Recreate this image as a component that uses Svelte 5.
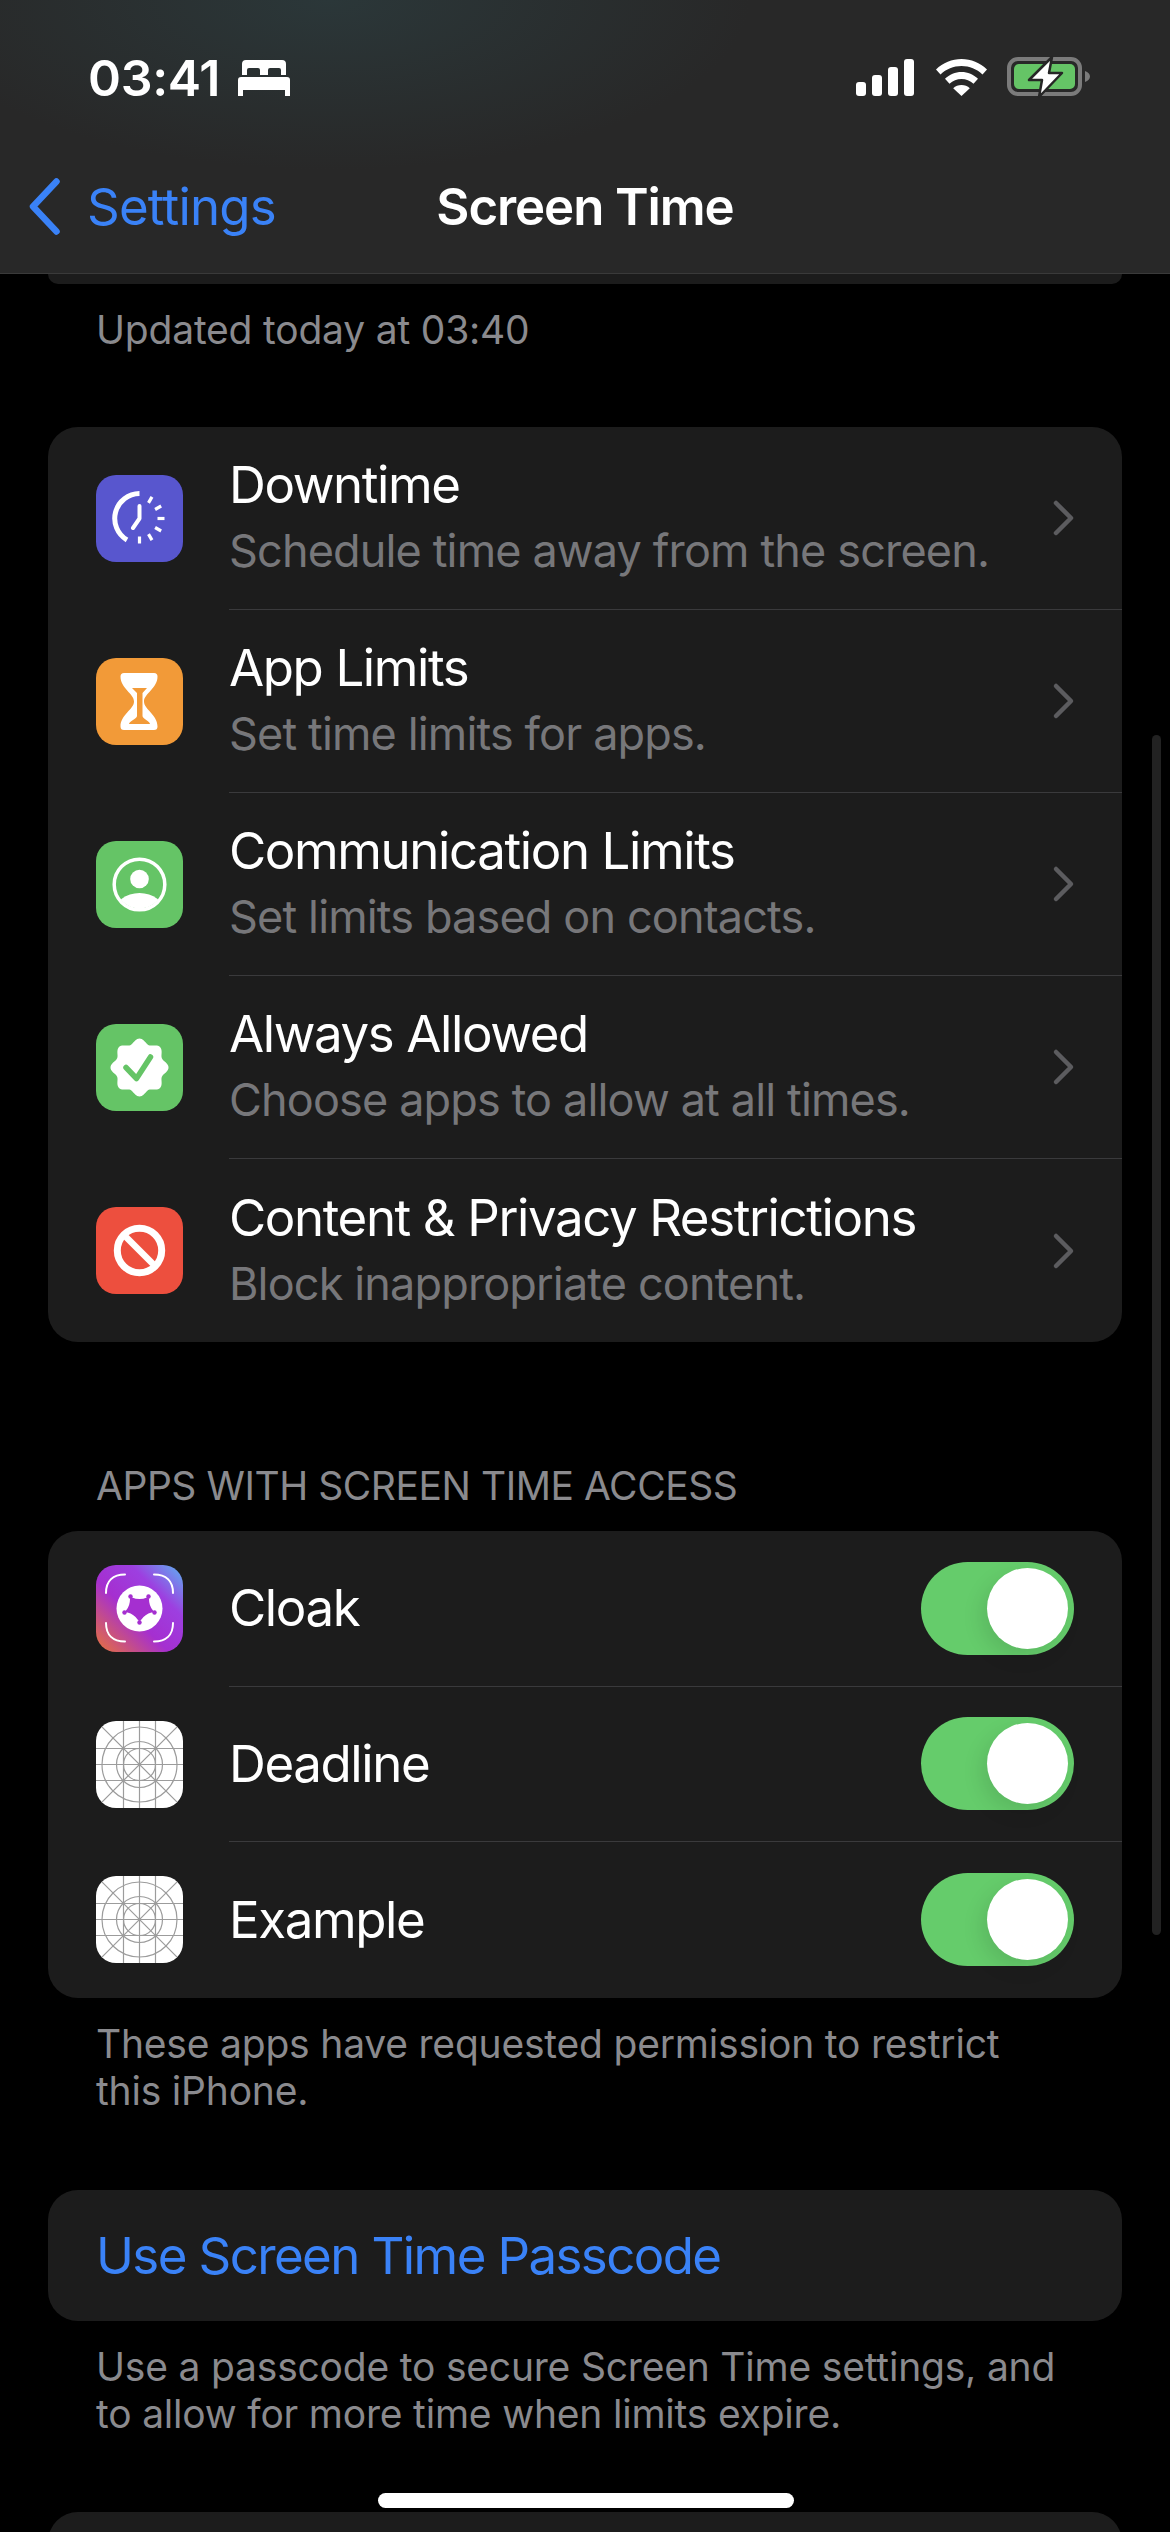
<script>
  const limits = [
    { icon: 'downtime', title: 'Downtime', sub: 'Schedule time away from the screen.' },
    { icon: 'limits', title: 'App Limits', sub: 'Set time limits for apps.' },
    { icon: 'comm', title: 'Communication Limits', sub: 'Set limits based on contacts.' },
    { icon: 'allowed', title: 'Always Allowed', sub: 'Choose apps to allow at all times.' },
    { icon: 'content', title: 'Content & Privacy Restrictions', sub: 'Block inappropriate content.' }
  ];
  const apps = [
    { icon: 'cloak', title: 'Cloak' },
    { icon: 'grid', title: 'Deadline' },
    { icon: 'grid', title: 'Example' }
  ];
  const ticks = [30, 60, 90, 120, 150, 180].map((d) => {
    const a = ((d - 90) * Math.PI) / 180;
    return {
      x1: 43.5 + 18 * Math.cos(a), y1: 43.5 + 18 * Math.sin(a),
      x2: 43.5 + 25 * Math.cos(a), y2: 43.5 + 25 * Math.sin(a)
    };
  });
  let badge = '';
  for (let i = 0; i < 160; i++) {
    const t = (i / 160) * Math.PI * 2;
    const r = 26.6 + 2.4 * Math.cos(8 * t);
    badge += (i ? 'L' : 'M') + (43.5 + r * Math.sin(t)).toFixed(2) + ' ' + (43.5 - r * Math.cos(t)).toFixed(2);
  }
  badge += 'Z';
</script>

{#snippet icon(name)}
  <svg class="icon" viewBox="0 0 87 87" aria-hidden="true">
    {#if name === 'downtime'}
      <rect width="87" height="87" rx="20" fill="#5856ce" />
      <path d="M43.5 18.5A25 25 0 0 0 31 65" fill="none" stroke="#fff" stroke-width="5" />
      <path d="M43.5 31V43.5L37 53" fill="none" stroke="#fff" stroke-width="4" stroke-linecap="round" stroke-linejoin="round" />
      {#each ticks as t}
        <line x1={t.x1} y1={t.y1} x2={t.x2} y2={t.y2} stroke="#fff" stroke-width="3.2" />
      {/each}
    {:else if name === 'limits'}
      <rect width="87" height="87" rx="20" fill="#f29a38" />
      <path d="M28 15H58a3.500 3.500 0 0 1 3.500 3.500c0 12-13.500 17-13.500 25c0 8 13.500 13 13.500 25a3.500 3.500 0 0 1-3.500 3.500H28a3.500 3.500 0 0 1-3.500-3.500c0-12 13.500-17 13.500-25c0-8-13.500-13-13.500-25A3.500 3.500 0 0 1 28 15Z" fill="#fff" />
      <path d="M36 30H51L46.500 35V58C46.500 61 54 63 54 66H33C33 63 41 61 41 58V35Z" fill="#f29a38" />
    {:else if name === 'comm'}
      <defs>
        <clipPath id="commClip"><circle cx="43.500" cy="43.500" r="24" /></clipPath>
      </defs>
      <rect width="87" height="87" rx="20" fill="#65c466" />
      <circle cx="43.500" cy="43.500" r="25.300" fill="none" stroke="#fff" stroke-width="3.500" />
      <circle cx="43.500" cy="38" r="9.300" fill="#fff" />
      <ellipse cx="43.500" cy="72" rx="25" ry="20" fill="#fff" clip-path="url(#commClip)" />
    {:else if name === 'allowed'}
      <rect width="87" height="87" rx="20" fill="#65c466" />
      <path d={badge} fill="#fff" />
      <path d="M30 43.500L40.500 54.500L54.500 33" fill="none" stroke="#65c466" stroke-width="5.500" stroke-linecap="round" stroke-linejoin="round" />
    {:else if name === 'content'}
      <rect width="87" height="87" rx="20" fill="#ed4f3e" />
      <circle cx="43.500" cy="43.500" r="22.200" fill="none" stroke="#fff" stroke-width="7" />
      <line x1="28" y1="28" x2="59" y2="59" stroke="#fff" stroke-width="6.500" />
    {:else if name === 'cloak'}
      <defs>
        <linearGradient id="cloakFill" x1="0" y1="1" x2="1" y2="0">
          <stop offset="0" stop-color="#e8743a" />
          <stop offset="0.2" stop-color="#c9527f" />
          <stop offset="0.42" stop-color="#a52fd0" />
          <stop offset="0.7" stop-color="#9d3fe0" />
          <stop offset="1" stop-color="#5cb4f2" />
        </linearGradient>
      </defs>
      <rect width="87" height="87" rx="20" fill="url(#cloakFill)" />
      <g fill="none" stroke="#fff" stroke-width="2" stroke-linecap="round">
        <path d="M10 28C10 16 17 9.500 29 9.500" />
        <path d="M58 9.500C70 9.500 77 16 77 28" />
        <path d="M10 58C10 70 17 76.500 29 76.500" />
        <path d="M58 76.500C70 76.500 77 70 77 58" />
      </g>
      <circle cx="43.500" cy="43.500" r="23" fill="#fff" />
      <path d="M36 32.500Q43.500 35.500 51 32.500Q53 31.500 53 34Q53 41 57 45.500Q58 47.500 55.500 47.500Q49 49 45 55Q43.500 57 42 55Q38 49 31.500 47.500Q29 47.500 30 45.500Q34 41 34 34Q34 31.500 36 32.500Z" fill="#a52fd0" />
      <circle cx="34.500" cy="31.500" r="2.200" fill="#a52fd0" />
      <circle cx="52.500" cy="31.500" r="2.200" fill="#a52fd0" />
      <circle cx="58.500" cy="47.500" r="2.200" fill="#a52fd0" />
      <circle cx="28.500" cy="47.500" r="2.200" fill="#a52fd0" />
      <circle cx="43.500" cy="57.500" r="2.200" fill="#a52fd0" />
    {:else}
      <defs>
        <clipPath id="gridClip"><rect width="87" height="87" rx="20" /></clipPath>
      </defs>
      <g clip-path="url(#gridClip)">
        <rect width="87" height="87" fill="#fff" />
        <g fill="none" stroke="#9c9c9c" stroke-width="1.200">
          <path d="M27.500 0V87M43.500 0V87M59.500 0V87M0 27.500H87M0 43.500H87M0 59.500H87M0 0L87 87M87 0L0 87" />
          <circle cx="43.500" cy="43.500" r="37.500" />
          <circle cx="43.500" cy="43.500" r="23" />
          <circle cx="43.500" cy="43.500" r="16" />
        </g>
      </g>
    {/if}
  </svg>
{/snippet}

<div class="screen">
  <header class="bar">
    <div class="status">
      <div class="clock">
        <span>03:41</span>
        <svg class="bed" viewBox="0 0 52 36" aria-hidden="true">
          <path fill="#fff" fill-rule="evenodd" d="M8 0H44a4 4 0 0 1 4 4V15H43V10a2 2 0 0 0-2-2H32a2 2 0 0 0-2 2v5H22V10a2 2 0 0 0-2-2H11a2 2 0 0 0-2 2v5H4V4a4 4 0 0 1 4-4ZM3 17H49a3 3 0 0 1 3 3V36H47V30H5V36H0V20a3 3 0 0 1 3-3Z" />
        </svg>
      </div>
      <div class="glyphs">
        <svg class="signal" viewBox="0 0 58 37" aria-hidden="true">
          <rect x="0" y="23" width="10" height="14" rx="3" fill="#fff" />
          <rect x="16" y="16" width="10" height="21" rx="3" fill="#fff" />
          <rect x="32" y="8" width="10" height="29" rx="3" fill="#fff" />
          <rect x="48" y="0" width="10" height="37" rx="3" fill="#fff" />
        </svg>
        <svg class="wifi" viewBox="0 0 51 37" aria-hidden="true">
          <path fill="#fff" d="M25.500 0C35 0 44 3.800 51 10.500L46.500 15.500C40.800 10 33.500 7 25.500 7S10.200 10 4.500 15.500L0 10.500C7 3.800 16 0 25.500 0Z" />
          <path fill="#fff" d="M25.500 13C31.800 13 37.500 15.500 42 19.800L37.500 24.800C34.200 21.600 30 20 25.500 20S16.800 21.600 13.500 24.800L9 19.800C13.500 15.500 19.200 13 25.500 13Z" />
          <path fill="#fff" d="M25.500 26C28.700 26 31.500 27.200 33.800 29.200L25.500 37L17.200 29.200C19.500 27.200 22.300 26 25.500 26Z" />
        </svg>
        <svg class="battery" viewBox="0 0 84 44" aria-hidden="true">
          <rect x="2" y="4" width="71" height="35" rx="9" fill="none" stroke="#7b7b7b" stroke-width="4" />
          <rect x="7" y="9" width="61" height="25" rx="5" fill="#65c466" />
          <path d="M78 16C81 17 83 19 83 21.500S81 26 78 27Z" fill="#7b7b7b" />
          <path d="M45 2L22 25H35L32 42L55 18H42Z" fill="#fff" stroke="#262626" stroke-width="2.500" stroke-linejoin="round" />
        </svg>
      </div>
    </div>
    <nav class="nav">
      <div class="back">
        <svg class="chev-back" viewBox="0 0 32 57" aria-hidden="true">
          <path d="M28 3.500L4.500 28.500L28 53.500" fill="none" stroke="#3a82f7" stroke-width="6.500" stroke-linecap="round" stroke-linejoin="round" />
        </svg>
        <span>Settings</span>
      </div>
      <h1>Screen Time</h1>
      <div></div>
    </nav>
  </header>

  <main class="content">
    <div class="peek"></div>
    <p class="note updated">Updated today at 03:40</p>

    <section class="card first">
      {#each limits as item}
        <div class="row tall">
          {@render icon(item.icon)}
          <div class="body">
            <div class="text">
              <div class="title">{item.title}</div>
              <div class="sub">{item.sub}</div>
            </div>
            <svg class="chev" viewBox="0 0 24 38" aria-hidden="true">
              <path d="M4 4L19 19L4 34" fill="none" stroke="#5c5c5f" stroke-width="4.500" stroke-linecap="round" stroke-linejoin="round" />
            </svg>
          </div>
        </div>
      {/each}
    </section>

    <h2>APPS WITH SCREEN TIME ACCESS</h2>
    <section class="card">
      {#each apps as app}
        <div class="row short">
          {@render icon(app.icon)}
          <div class="body">
            <div class="title">{app.title}</div>
            <div class="toggle"><span class="thumb"></span></div>
          </div>
        </div>
      {/each}
    </section>
    <p class="note after">These apps have requested permission to restrict<br />this iPhone.</p>

    <section class="card passcode">Use Screen Time Passcode</section>
    <p class="note after">Use a passcode to secure Screen Time settings, and<br />to allow for more time when limits expire.</p>

    <section class="card last"></section>
  </main>

  <div class="scrollbar"></div>
  <div class="home"></div>
</div>

<style>
  :global(body) {
    margin: 0;
    background: #000;
  }
  .screen {
    position: relative;
    width: 1170px;
    height: 2532px;
    overflow: hidden;
    background: #000;
    color: #fff;
    font-family: Inter, "Noto Sans", "Liberation Sans", sans-serif;
  }
  .bar {
    height: 273px;
    border-bottom: 1px solid #3a3a3a;
    background:
      radial-gradient(ellipse 420px 170px at 330px 0, #2b3739 0%, rgba(43, 55, 57, 0) 100%),
      #282828;
  }
  .status {
    height: 156px;
    box-sizing: border-box;
    padding: 54px 79px 0 88px;
    display: flex;
    justify-content: space-between;
    align-items: flex-start;
  }
  .clock {
    display: flex;
    align-items: center;
    gap: 18px;
    height: 48px;
    font-size: 50px;
    font-weight: 600;
    letter-spacing: -0.3px;
  }
  .bed {
    width: 52px;
    height: 36px;
  }
  .glyphs {
    display: flex;
    align-items: flex-start;
    margin-top: 3px;
  }
  .signal {
    width: 58px;
    height: 37px;
    margin-top: 2px;
  }
  .wifi {
    width: 51px;
    height: 37px;
    margin: 2px 0 0 22px;
  }
  .battery {
    width: 84px;
    height: 44px;
    margin: -2px 0 0 20px;
  }
  .nav {
    display: grid;
    grid-template-columns: 1fr auto 1fr;
    align-items: center;
    height: 100px;
    margin-top: 0;
  }
  .back {
    display: flex;
    align-items: center;
    gap: 26px;
    padding-left: 28px;
    font-size: 51px;
    color: #3a82f7;
    letter-spacing: -0.8px;
  }
  .chev-back {
    width: 33px;
    height: 57px;
  }
  h1 {
    margin: 0;
    font-size: 51px;
    font-weight: 600;
    letter-spacing: -1.1px;
  }
  .content {
    padding: 0 48px;
  }
  .card {
    background: #1c1c1c;
    border-radius: 30px;
    overflow: hidden;
  }
  .peek {
    height: 10px;
    background: #1c1c1c;
    border-radius: 0 0 30px 30px;
  }
  .note {
    margin: 0;
    padding: 0 48px;
    font-size: 39px;
    line-height: 47px;
    letter-spacing: -0.2px;
    color: #8a8a8e;
  }
  .updated {
    margin-top: 22px;
  }
  .first {
    margin-top: 74px;
  }
  .row {
    display: flex;
    align-items: center;
  }
  .tall {
    height: 183px;
  }
  .short {
    height: 155.500px;
  }
  .icon {
    flex: none;
    width: 87px;
    height: 87px;
    margin: 0 46px 0 48px;
  }
  .body {
    flex: 1;
    min-width: 0;
    height: 100%;
    box-sizing: border-box;
    display: flex;
    align-items: center;
    justify-content: space-between;
    border-bottom: 1px solid #3a3a3c;
  }
  .row:last-child .body {
    border-bottom: 0;
  }
  .short .body {
    padding-right: 48px;
  }
  .tall .body {
    padding-right: 46px;
  }
  .text {
    padding-bottom: 3px;
  }
  .title {
    font-size: 51px;
    line-height: 60px;
    letter-spacing: -1.4px;
  }
  .sub {
    font-size: 45px;
    line-height: 54px;
    margin-top: 9px;
    color: #77777a;
    letter-spacing: -0.85px;
  }
  .chev {
    width: 24px;
    height: 38px;
  }
  h2 {
    margin: 122px 0 23px;
    padding: 0 48px;
    height: 44px;
    font-size: 39px;
    line-height: 44px;
    font-weight: 400;
    letter-spacing: -0.45px;
    color: #8a8a8e;
  }
  .toggle {
    position: relative;
    width: 153px;
    height: 93px;
    border-radius: 47px;
    background: #65cc6b;
  }
  .thumb {
    position: absolute;
    top: 6px;
    right: 6px;
    width: 81px;
    height: 81px;
    border-radius: 50%;
    background: #fff;
    box-shadow: -6px 8px 20px rgba(0, 0, 0, 0.1);
  }
  .after {
    margin-top: 22px;
  }
  .passcode {
    margin-top: 76px;
    height: 131px;
    padding-left: 48px;
    display: flex;
    align-items: center;
    font-size: 51px;
    color: #3a82f7;
    letter-spacing: -1.6px;
  }
  .last {
    margin-top: 75px;
    height: 200px;
  }
  .scrollbar {
    position: absolute;
    left: 1152px;
    top: 735px;
    width: 9px;
    height: 1200px;
    border-radius: 5px;
    background: #222;
  }
  .home {
    position: absolute;
    left: 378px;
    top: 2493px;
    width: 416px;
    height: 15px;
    border-radius: 8px;
    background: #fff;
  }
</style>
